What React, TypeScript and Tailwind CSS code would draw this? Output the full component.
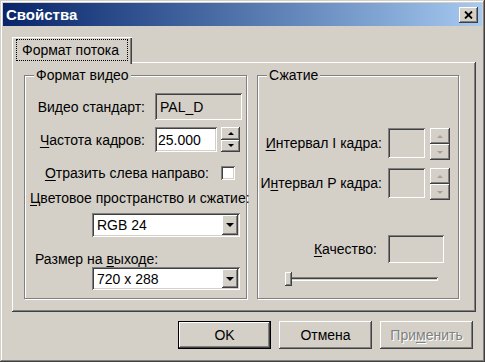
const raised =
  'shadow-[inset_-1px_-1px_#404040,inset_1px_1px_#ffffff,inset_-2px_-2px_#808080,inset_2px_2px_#d4d0c8]';
const sunken =
  'shadow-[inset_1px_1px_#808080,inset_-1px_-1px_#ffffff,inset_2px_2px_#404040,inset_-2px_-2px_#d4d0c8]';

function Mn({ children }: { children: string }) {
  return <span className="underline underline-offset-2">{children}</span>;
}

function SpinButtons({ disabled = false }: { disabled?: boolean }) {
  const up = disabled
    ? 'border-x-[3px] border-b-[3px] border-x-transparent border-b-[#a0a0a0]'
    : 'border-x-[3px] border-b-[3px] border-x-transparent border-b-black';
  const down = disabled
    ? 'border-x-[3px] border-t-[3px] border-x-transparent border-t-[#a0a0a0]'
    : 'border-x-[3px] border-t-[3px] border-x-transparent border-t-black';
  return (
    <div className="flex h-full w-full flex-col">
      <div className={`flex flex-1 items-center justify-center bg-[#d4d0c8] ${raised}`}>
        <span className={up} />
      </div>
      <div className={`flex flex-1 items-center justify-center bg-[#d4d0c8] ${raised}`}>
        <span className={down} />
      </div>
    </div>
  );
}

function Combo({ value }: { value: string }) {
  return (
    <div className={`flex h-full w-full items-stretch bg-white p-[2px] ${sunken}`}>
      <div className="flex flex-1 items-center pl-[3px]">{value}</div>
      <div className={`flex w-[16px] items-center justify-center bg-[#d4d0c8] ${raised}`}>
        <span className="border-x-[4px] border-t-[4px] border-x-transparent border-t-black" />
      </div>
    </div>
  );
}

function Button({ label, primary = false, disabled = false }: { label: React.ReactNode; primary?: boolean; disabled?: boolean }) {
  return (
    <button
      type="button"
      className={`flex h-[28px] w-[93px] items-center justify-center bg-[#d4d0c8] ${raised} ${
        primary ? 'border border-black' : ''
      } ${disabled ? 'text-[#808080] [text-shadow:1px_1px_#ffffff]' : 'text-black'}`}
    >
      {label}
    </button>
  );
}

export default function App() {
  return (
    <div className="h-[362px] w-[485px] overflow-hidden bg-[#d4d0c8] font-['Liberation_Sans',Arial,sans-serif] text-[14px] leading-[16px] text-black shadow-[inset_-1px_-1px_#404040,inset_1px_1px_#d4d0c8,inset_-2px_-2px_#808080,inset_2px_2px_#ffffff]">
      {/* title bar */}
      <div className="mx-[3px] flex h-[26px] items-end">
        <div className="flex h-[23px] w-full items-center justify-between bg-linear-to-r from-[#0a246a] to-[#a6caf0] pl-[3px] pr-[4px]">
          <span className="text-[15px] font-bold text-white">Свойства</span>
          <div className={`flex h-[16px] w-[19px] items-center justify-center bg-[#d4d0c8] ${raised}`}>
            <svg width="9" height="8" viewBox="0 0 9 8">
              <path d="M1 0.5 L8 7.5 M8 0.5 L1 7.5" stroke="black" strokeWidth="1.8" />
            </svg>
          </div>
        </div>
      </div>

      {/* tab */}
      <div className="ml-[12px] mt-[11px] flex">
        <div className="relative z-10 -mb-[2px] h-[27px] w-[120px] bg-[#d4d0c8] pt-[2px] pl-[4px] shadow-[inset_1px_1px_#ffffff,inset_-1px_0_#404040,inset_-2px_0_#808080]">
          <div className="flex h-[22px] w-[112px] items-center border border-dotted border-black pl-[5px]">
            Формат потока
          </div>
        </div>
      </div>

      {/* panel */}
      <div className="ml-[12px] flex h-[250px] w-[464px] gap-[10px] bg-[#d4d0c8] pl-[12px] pt-[13px] shadow-[inset_-1px_-1px_#404040,inset_1px_1px_#ffffff,inset_-2px_-2px_#808080]">
        {/* video format group */}
        <div className="relative h-[224px] w-[223px] border border-[#808080] shadow-[inset_1px_1px_#ffffff,1px_1px_#ffffff]">
          <span className="absolute left-[9px] top-[-9px] bg-[#d4d0c8] px-[2px]">Формат видео</span>
          <div className="flex flex-col">
            <div className="mt-[17px] flex h-[27px] items-center">
              <span className="w-[120px] whitespace-nowrap text-right">Видео стандарт:</span>
              <div className={`ml-[10px] flex h-full w-[87px] items-center bg-[#d4d0c8] pl-[5px] ${sunken}`}>PAL_D</div>
            </div>
            <div className="mt-[7px] flex h-[25px] items-center">
              <span className="w-[120px] whitespace-nowrap text-right">
                <Mn>Ч</Mn>астота кадров:
              </span>
              <div className={`ml-[10px] flex h-full w-[62px] items-center bg-white pl-[3px] ${sunken}`}>25.000</div>
              <div className="ml-[4px] h-full w-[19px]">
                <SpinButtons />
              </div>
            </div>
            <div className="mt-[13px] flex h-[15px] items-center">
              <span className="w-[184px] whitespace-nowrap text-right">
                <Mn>О</Mn>тразить слева направо:
              </span>
              <div className={`ml-[12px] h-[14px] w-[14px] bg-white ${sunken}`} />
            </div>
            <div className="mt-[10px] h-[16px] whitespace-nowrap pl-[5px]">
              <Mn>Ц</Mn>ветовое пространство и сжатие:
            </div>
            <div className="ml-[67px] mt-[7px] h-[24px] w-[148px]">
              <Combo value="RGB 24" />
            </div>
            <div className="mt-[14px] h-[16px] pl-[10px]">
              Размер на <Mn>в</Mn>ыходе:
            </div>
            <div className="ml-[67px] h-[23px] w-[148px]">
              <Combo value="720 x 288" />
            </div>
          </div>
        </div>

        {/* compression group */}
        <div className="relative h-[224px] w-[202px] border border-[#808080] shadow-[inset_1px_1px_#ffffff,1px_1px_#ffffff]">
          <span className="absolute left-[9px] top-[-9px] bg-[#d4d0c8] px-[2px]">Сжатие</span>
          <div className="flex flex-col">
            <div className="mt-[52px] flex h-[32px] items-start">
              <span className="flex h-[30px] w-[124px] items-center justify-end whitespace-nowrap">
                <Mn>И</Mn>нтервал I кадра:
              </span>
              <div className={`ml-[6px] h-[30px] w-[37px] bg-[#d4d0c8] ${sunken}`} />
              <div className="ml-[5px] h-[32px] w-[20px]">
                <SpinButtons disabled />
              </div>
            </div>
            <div className="mt-[8px] flex h-[32px] items-start">
              <span className="flex h-[30px] w-[124px] items-center justify-end whitespace-nowrap">
                И<Mn>н</Mn>тервал P кадра:
              </span>
              <div className={`ml-[6px] h-[30px] w-[37px] bg-[#d4d0c8] ${sunken}`} />
              <div className="ml-[5px] h-[32px] w-[20px]">
                <SpinButtons disabled />
              </div>
            </div>
            <div className="mt-[35px] flex h-[28px] items-center">
              <span className="w-[119px] text-right">
                <Mn>К</Mn>ачество:
              </span>
              <div className={`ml-[11px] h-full w-[56px] bg-[#d4d0c8] ${sunken}`} />
            </div>
            <div className="relative ml-[30px] mt-[9px] h-[15px] w-[150px]">
              <div className="mt-[5px] h-[4px] w-full shadow-[inset_1px_1px_#808080,inset_-1px_-1px_#ffffff,inset_2px_2px_#404040]" />
              <div className={`absolute left-[-3px] top-0 h-[14px] w-[7px] bg-[#d4d0c8] ${raised}`} />
            </div>
          </div>
        </div>
      </div>

      {/* buttons */}
      <div className="mt-[9px] flex justify-end gap-[8px] pr-[12px]">
        <Button label="OK" primary />
        <Button label="Отмена" />
        <Button
          label={
            <span>
              При<Mn>м</Mn>енить
            </span>
          }
          disabled
        />
      </div>
    </div>
  );
}
